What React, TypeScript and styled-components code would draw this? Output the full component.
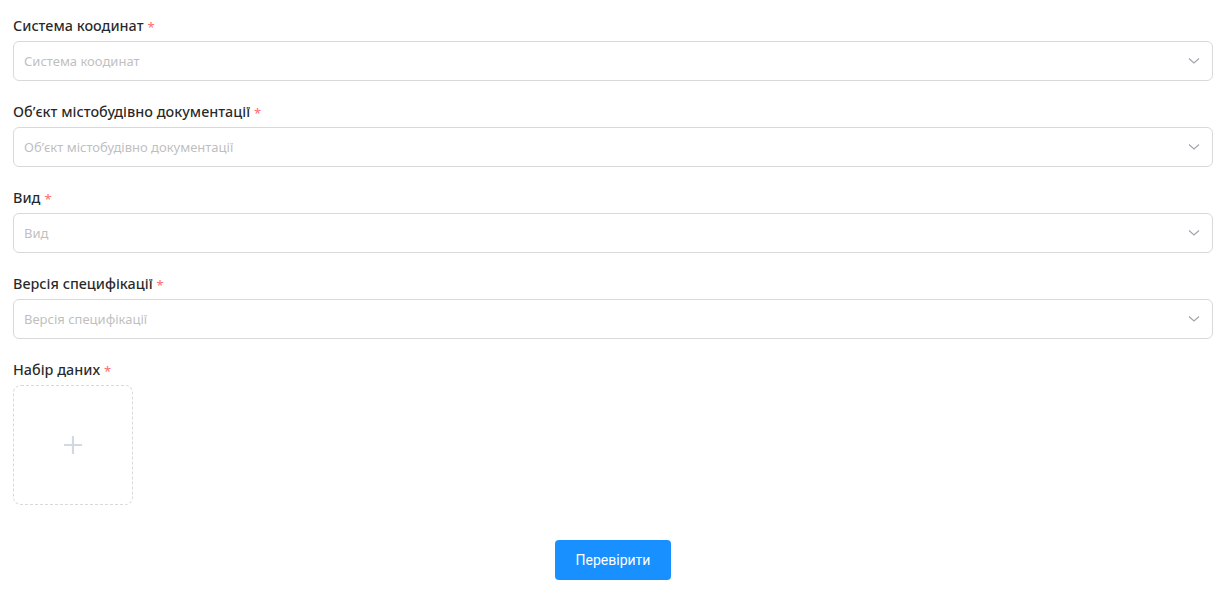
import React from "react";
import styled, { createGlobalStyle } from "styled-components";

const Global = createGlobalStyle`
  html, body { margin: 0; padding: 0; background: #fff; }
  body { font-family: "Noto Sans", "Open Sans", sans-serif; }
  * { box-sizing: border-box; }
`;

const Page = styled.div`
  padding: 14px 12px 0 13px;
  display: flex;
  flex-direction: column;
`;

const Item = styled.div`
  display: flex;
  flex-direction: column;
  margin-bottom: 19px;
`;

const Label = styled.label`
  font-size: 14.4px;
  font-weight: 500;
  line-height: 22px;
  height: 22px;
  color: rgba(0, 0, 0, 0.85);
  margin-bottom: 5px;
  padding-top: 1px;
  display: flex;
  align-items: center;
`;

const Req = styled.span`
  color: #ff6b6b;
  margin-left: 4px;
  font-size: 13px;
  font-weight: 400;
  padding-top: 2px;
`;

const SelectBox = styled.div`
  height: 40px;
  border: 1px solid #d9d9d9;
  border-radius: 6px;
  display: flex;
  align-items: center;
  justify-content: space-between;
  padding: 0 12px 0 10px;
  background: #fff;
`;

const Placeholder = styled.span`
  font-size: 13px;
  color: #bfbfbf;
`;

const Upload = styled.div`
  width: 120px;
  height: 120px;
  border: 1px dashed #d9d9d9;
  border-radius: 8px;
  display: flex;
  align-items: center;
  justify-content: center;
  background: #fff;
`;

const Footer = styled.div`
  display: flex;
  justify-content: center;
  margin-top: 16px;
`;

const Button = styled.button`
  width: 116px;
  height: 40px;
  background: #1890ff;
  color: #fff;
  border: none;
  border-radius: 4px;
  font-family: Roboto, "Liberation Sans", sans-serif;
  font-size: 14px;
`;

const Chevron = () => (
  <svg width="12" height="8" viewBox="0 0 12 8">
    <polyline points="1,1.5 6,6 11,1.5" fill="none" stroke="#a0a4ab" strokeWidth="1.1" />
  </svg>
);

const Plus = () => (
  <svg width="20" height="20" viewBox="0 0 20 20">
    <path d="M10 1 V19 M1 10 H19" stroke="#d3d9e2" strokeWidth="2.2" />
  </svg>
);

const fields = [
  "Система коодинат",
  "Об’єкт містобудівно документації",
  "Вид",
  "Версія специфікації",
];

export default function App() {
  return (
    <>
      <Global />
      <Page>
        {fields.map((f) => (
          <Item key={f}>
            <Label>
              {f}
              <Req>*</Req>
            </Label>
            <SelectBox>
              <Placeholder>{f}</Placeholder>
              <Chevron />
            </SelectBox>
          </Item>
        ))}
        <Item>
          <Label>
            Набір даних
            <Req>*</Req>
          </Label>
          <Upload>
            <Plus />
          </Upload>
        </Item>
        <Footer>
          <Button>Перевірити</Button>
        </Footer>
      </Page>
    </>
  );
}
